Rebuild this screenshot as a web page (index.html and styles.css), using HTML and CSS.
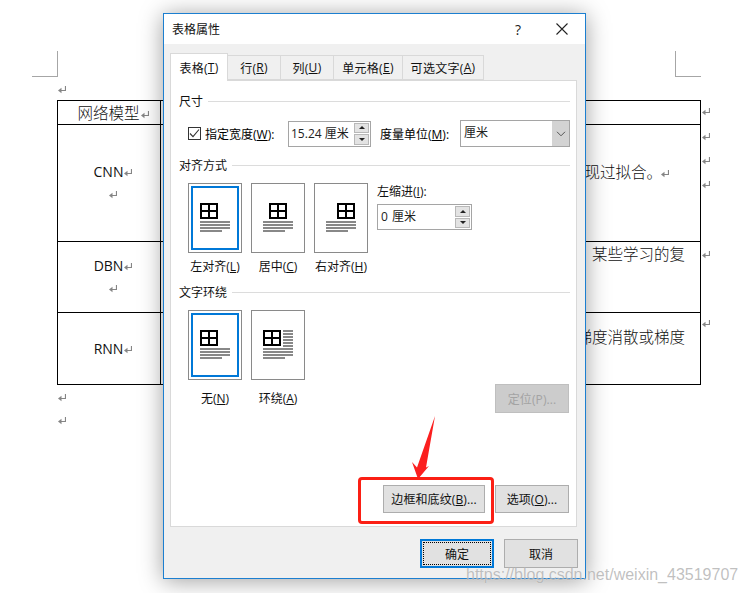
FILE: index.html
```html
<!DOCTYPE html>
<html lang="zh-CN">
<head>
<meta charset="utf-8">
<title>表格属性</title>
<link rel="stylesheet" href="styles.css">
</head>
<body>
<svg class="defs" width="0" height="0" aria-hidden="true">
  <defs>
    <g id="grid">
      <path d="M1.500 1.500h16v14h-16zM9.500 1.500v14M1.500 8.500h16" fill="#fff" stroke="#000" stroke-width="2"/>
    </g>
    <g id="para" fill="#888">
      <rect x="0" y="0" width="30" height="2"/>
      <rect x="0" y="3" width="30" height="2"/>
      <rect x="0" y="6" width="30" height="2"/>
      <rect x="0" y="9" width="22" height="2"/>
    </g>
    <g id="side" fill="#888">
      <rect x="0" y="0" width="10" height="2"/>
      <rect x="0" y="3" width="10" height="2"/>
      <rect x="0" y="6" width="10" height="2"/>
      <rect x="0" y="9" width="10" height="2"/>
      <rect x="0" y="12" width="10" height="2"/>
      <rect x="0" y="15" width="10" height="2"/>
    </g>
    <g id="retmark">
      <path d="M7.500 0v4.500H2" fill="none" stroke="#858585" stroke-width="1.200"/>
      <path d="M0 4.500L3.500 1.800v5.400z" fill="#858585"/>
    </g>
  </defs>
</svg>

<main class="doc">
  <div class="crops">
    <span class="crop crop-left"></span>
    <span class="crop crop-right"></span>
  </div>
  <p class="mark-line"><svg class="ret" width="8" height="8"><use href="#retmark"/></svg></p>
  <table class="doc-table">
    <tr class="r1">
      <td class="c1 head">网络模型<svg class="ret" width="8" height="8"><use href="#retmark"/></svg></td>
      <td class="c2"></td>
      <td class="c3"><svg class="ret" width="8" height="8"><use href="#retmark"/></svg></td>
    </tr>
    <tr class="r2">
      <td class="c1"><div class="cell-word cnn">CNN<svg class="ret" width="8" height="8"><use href="#retmark"/></svg></div><div class="cell-ret"><svg class="ret" width="8" height="8"><use href="#retmark"/></svg></div></td>
      <td class="c2"><div class="cell-text t-cnn">现过拟合。<svg class="ret wide" width="8" height="8"><use href="#retmark"/></svg></div></td>
      <td class="c3"><svg class="ret" width="8" height="8"><use href="#retmark"/></svg><svg class="ret" width="8" height="8"><use href="#retmark"/></svg><svg class="ret" width="8" height="8"><use href="#retmark"/></svg></td>
    </tr>
    <tr class="r3">
      <td class="c1"><div class="cell-word dbn">DBN<svg class="ret" width="8" height="8"><use href="#retmark"/></svg></div><div class="cell-ret"><svg class="ret" width="8" height="8"><use href="#retmark"/></svg></div></td>
      <td class="c2"><div class="cell-text t-dbn">某些学习的复</div></td>
      <td class="c3"><svg class="ret" width="8" height="8"><use href="#retmark"/></svg></td>
    </tr>
    <tr class="r4">
      <td class="c1"><div class="cell-word rnn">RNN<svg class="ret" width="8" height="8"><use href="#retmark"/></svg></div></td>
      <td class="c2"><div class="cell-text t-rnn">梯度消散或梯度</div></td>
      <td class="c3"><svg class="ret" width="8" height="8"><use href="#retmark"/></svg></td>
    </tr>
  </table>
  <p class="mark-line after1"><svg class="ret" width="8" height="8"><use href="#retmark"/></svg></p>
  <p class="mark-line after2"><svg class="ret" width="8" height="8"><use href="#retmark"/></svg></p>
</main>

<section class="dialog">
  <header class="titlebar">
    <span class="title">表格属性</span>
    <span class="help">?</span>
    <svg class="close" width="12" height="12" viewBox="0 0 12 12"><path d="M.5.5l11 11M11.500.5l-11 11" stroke="#222" stroke-width="1.100" fill="none"/></svg>
  </header>

  <nav class="tabs">
    <span class="tab active tab-a">表格(<u>T</u>)</span>
    <span class="tab tab-b">行(<u>R</u>)</span>
    <span class="tab tab-b">列(<u>U</u>)</span>
    <span class="tab tab-c">单元格(<u>E</u>)</span>
    <span class="tab tab-d">可选文字(<u>A</u>)</span>
  </nav>

  <div class="panel">
    <h3 class="group">尺寸</h3>
    <div class="size-row">
      <span class="check"><svg width="13" height="13" viewBox="0 0 13 13"><path d="M2 6.500l3 3.200L11 2.500" fill="none" stroke="#333" stroke-width="1.100"/></svg></span>
      <span class="lbl-width">指定宽度(<u>W</u>):</span>
      <span class="spin spin-width">
        <span class="spin-val">15.24 厘米</span>
        <span class="spin-btns"><span class="spin-btn"><i class="tri up"></i></span><span class="spin-btn"><i class="tri down"></i></span></span>
      </span>
      <span class="lbl-unit">度量单位(<u>M</u>):</span>
      <span class="select">
        <span class="select-val">厘米</span>
        <span class="select-arrow"><svg width="10" height="6" viewBox="0 0 10 6"><path d="M1 .8l4 4 4-4" fill="none" stroke="#555" stroke-width="1"/></svg></span>
      </span>
    </div>

    <h3 class="group group-align">对齐方式</h3>
    <div class="align-row">
      <div class="choice">
        <span class="tile selected"><svg class="art" width="54" height="70"><use href="#grid" x="11.500" y="19.500"/><use href="#para" x="12" y="38"/></svg></span>
        <span class="choice-label">左对齐(<u>L</u>)</span>
      </div>
      <div class="choice">
        <span class="tile"><svg class="art" width="54" height="70"><use href="#grid" x="17.500" y="19.500"/><use href="#para" x="12" y="38"/></svg></span>
        <span class="choice-label">居中(<u>C</u>)</span>
      </div>
      <div class="choice">
        <span class="tile"><svg class="art" width="54" height="70"><use href="#grid" x="22.500" y="19.500"/><use href="#para" x="12" y="38"/></svg></span>
        <span class="choice-label">右对齐(<u>H</u>)</span>
      </div>
      <div class="indent">
        <span class="indent-label">左缩进(<u>I</u>):</span>
        <span class="spin spin-indent">
          <span class="spin-val">0 厘米</span>
          <span class="spin-btns"><span class="spin-btn"><i class="tri up"></i></span><span class="spin-btn"><i class="tri down"></i></span></span>
        </span>
      </div>
    </div>

    <h3 class="group group-wrap">文字环绕</h3>
    <div class="wrap-row">
      <div class="wrap-choices">
        <div class="choice wide-gap">
          <span class="tile selected"><svg class="art" width="54" height="70"><use href="#grid" x="11.500" y="19.500"/><use href="#para" x="12" y="38"/></svg></span>
          <span class="choice-label">无(<u>N</u>)</span>
        </div>
        <div class="choice wide-gap">
          <span class="tile"><svg class="art" width="54" height="70"><use href="#grid" x="11.500" y="19.500"/><use href="#side" x="32" y="20"/><use href="#para" x="12" y="38"/></svg></span>
          <span class="choice-label">环绕(<u>A</u>)</span>
        </div>
      </div>
      <button class="btn btn-pos" disabled>定位(P)...</button>
    </div>

    <div class="panel-actions">
      <button class="btn btn-border">边框和底纹(<u>B</u>)...</button>
      <button class="btn btn-opts">选项(<u>O</u>)...</button>
    </div>
  </div>

  <footer class="footer">
    <button class="btn btn-ok"><span class="focus">确定</span></button>
    <button class="btn btn-cancel">取消</button>
  </footer>
</section>

<div class="highlight"></div>
<svg class="arrow" width="30" height="66" viewBox="0 0 30 66"><path d="M25 1L16 52.500L19 51L8 64L2 47L7 52.500Z" fill="#fb1f1f"/></svg>
<span class="watermark">https://blog.csdn.net/weixin_43519707</span>
</body>
</html>
```
FILE: styles.css
```css
* { box-sizing: border-box; }
html, body { margin: 0; padding: 0; }
body {
  position: relative;
  width: 748px;
  height: 593px;
  overflow: hidden;
  background: #fff;
  color: #000;
  font-family: "Open Sans", "Noto Sans CJK SC", "Noto Sans", sans-serif;
  font-size: 12px;
}
.defs { position: absolute; }
u { text-decoration: underline; text-underline-offset: 1px; }

/* document behind the dialog */
.doc { padding: 51px 0 0 57px; }
.crops { position: relative; height: 26px; width: 644px; }
.crop { position: absolute; top: 0; width: 26px; height: 26px; border-bottom: 1px solid #a6a6a6; }
.crop-left { left: -25px; border-right: 1px solid #a6a6a6; }
.crop-right { left: 618px; border-left: 1px solid #a6a6a6; }
.mark-line { margin: 0; height: 23px; padding: 9px 0 0 1px; line-height: 8px; }
.ret { display: inline-block; vertical-align: baseline; }
.doc-table { border-collapse: collapse; table-layout: fixed; width: 663px; }
.doc-table td { padding: 0; vertical-align: top; }
.c1 { width: 103px; border: 1px solid #000; text-align: center; }
.c2 { width: 540px; border: 1px solid #000; text-align: right; }
.c3 { width: 20px; border: 0; }
.doc-table td.c3 { padding-left: 1px; }
.c3 .ret { display: block; }
.r1 { height: 24px; }
.r2 { height: 117px; }
.r3 { height: 71px; }
.r4 { height: 72px; }
.head { font-family: "Noto Sans CJK SC", sans-serif; font-size: 15.500px; line-height: 22px; color: #111; font-weight: 300; }
.doc-table td.head { padding-left: 8px; }
.head .ret { margin-left: 1px; }
.r1 .c3 .ret { margin-top: 7px; }
.r2 .c3 .ret { margin-top: 8px; margin-bottom: 16px; }
.r3 .c3 .ret { margin-top: 9px; }
.r4 .c3 .ret { margin-top: 7px; }
.cell-word { font-size: 14px; line-height: 18px; color: #111; }
.doc-table td.c1 .cell-word { padding-left: 8px; }
.cell-word .ret { margin-left: 1px; }
.cnn { padding-top: 38px; }
.dbn { padding-top: 15px; }
.rnn { padding-top: 27px; }
.cell-ret { margin-top: 10px; padding-left: 7px; line-height: 8px; }
.cell-text { font-family: "Noto Sans CJK SC", sans-serif; font-size: 15.500px; line-height: 22px; color: #111; font-weight: 300; }
.t-cnn { padding: 35px 31px 0 0; }
.t-dbn { padding: 0 15px 0 0; }
.t-rnn { padding: 12px 15px 0 0; }
.ret.wide { margin-left: -1px; }
.mark-line.after1 { margin-top: 0; }

/* dialog window */
.dialog {
  position: absolute;
  left: 163px;
  top: 13px;
  width: 423px;
  height: 566px;
  display: flex;
  flex-direction: column;
  background: #f0f0f0;
  border: 1px solid #1c7fd0;
  box-shadow: 0 2px 22px rgba(0, 0, 0, .38);
}
.titlebar {
  height: 30px;
  flex: none;
  background: #fff;
  display: flex;
  align-items: center;
  padding: 0 17px 0 8px;
}
.title { font-size: 12px; flex: 1; color: #111; }
.help { font-size: 14px; margin-right: 35px; color: #222; }
.tabs { display: flex; align-items: flex-end; height: 27px; margin: 9px 0 0 6px; position: relative; z-index: 1; }
.tab {
  height: 25px;
  border: 1px solid #d9d9d9;
  border-left-width: 0;
  background: #f0f0f0;
  display: flex;
  align-items: center;
  justify-content: center;
  color: #111;
  font-size: 12px;
  letter-spacing: .3px;
}
.tab.active {
  height: 28px;
  margin-bottom: -1px;
  border-left-width: 1px;
  border-bottom: 0;
  background: #fff;
}
.tab-a { width: 58px; }
.tab-b { width: 53px; }
.tab-c { width: 69px; }
.tab-d { width: 81px; }
.panel {
  width: 407px;
  height: 447px;
  margin-left: 6px;
  flex: none;
  background: #fff;
  border: 1px solid #d9d9d9;
  padding: 12px 6px 13px 8px;
  display: flex;
  flex-direction: column;
}
.group {
  margin: 0;
  height: 16px;
  display: flex;
  align-items: center;
  gap: 5px;
  font-size: 12px;
  font-weight: 400;
  color: #111;
}
.group::after { content: ""; flex: 1; height: 1px; background: #dcdcdc; }
.size-row { display: flex; align-items: center; height: 27px; margin: 11px 0 0 9px; }
.check { width: 13px; height: 13px; border: 1px solid #333; display: flex; flex: none; }
.check svg { margin: -1px; }
.lbl-width { margin-left: 4px; width: 83px; white-space: nowrap; }
.spin { display: flex; border: 1px solid #a5a5a5; background: #fff; flex: none; }
.spin-width { width: 83px; height: 26px; }
.spin-indent { width: 95px; height: 26px; }
.spin-val { flex: 1; padding-left: 2px; line-height: 23px; white-space: nowrap; color: #222; }
.spin-indent .spin-val { padding-left: 3px; word-spacing: 1px; }
.spin-btns { width: 15px; margin: 1px; display: flex; flex-direction: column; gap: 1px; }
.spin-btn { flex: 1; background: #e3e3e3; border: 1px solid #b8b8b8; display: flex; align-items: center; justify-content: center; }
.tri { width: 0; height: 0; border-left: 3px solid transparent; border-right: 3px solid transparent; }
.tri.up { border-bottom: 3px solid #222; }
.tri.down { border-top: 3px solid #222; }
.lbl-unit { margin-left: 9px; width: 80px; white-space: nowrap; }
.select { flex: none; width: 110px; height: 27px; border: 1px solid #a5a5a5; background: #fff; display: flex; }
.select-val { flex: 1; padding-left: 3px; line-height: 24px; color: #222; }
.select-arrow { width: 17px; background: #d3d3d3; display: flex; align-items: center; justify-content: center; }
.group-align { margin-top: 10px; }
.align-row { display: flex; gap: 9px; margin: 10px 0 0 9px; }
.choice { width: 54px; display: flex; flex-direction: column; align-items: center; gap: 6px; }
.choice.wide-gap { gap: 11px; }
.tile { display: block; position: relative; width: 54px; height: 70px; border: 1px solid #8a8a8a; background: #fff; }
.tile.selected::after { content: ""; position: absolute; inset: 2px; border: 2px solid #0078d7; }
.art { position: absolute; left: -1px; top: -1px; }
.choice-label { line-height: 16px; white-space: nowrap; color: #111; }
.indent { display: flex; flex-direction: column; padding-top: 1px; }
.indent-label { line-height: 16px; margin-bottom: 4px; color: #111; }
.group-wrap { margin-top: 9px; }
.wrap-row { display: flex; justify-content: space-between; margin: 10px 1px 0 9px; }
.wrap-choices { display: flex; gap: 9px; }
.btn {
  font: inherit;
  font-size: 12px;
  color: #111;
  background: #e1e1e1;
  border: 1px solid #adadad;
  padding: 0;
  height: 29px;
  flex: none;
  letter-spacing: .1px;
}
.btn-pos { width: 74px; margin-top: 74px; background: #cccccc; border-color: #bfbfbf; color: #a3a3a3; }
.panel-actions { margin-top: auto; margin-right: 1px; display: flex; justify-content: flex-end; gap: 10px; }
.btn-border { width: 102px; height: 28px; }
.btn-opts { width: 74px; height: 28px; }
.footer { display: flex; justify-content: flex-end; gap: 10px; margin: 12px 7px 0 0; }
.btn-ok { width: 74px; border: 2px solid #0078d7; padding: 1px; }
.focus { display: flex; align-items: center; justify-content: center; height: 100%; border: 1px dotted #000; }
.btn-cancel { width: 74px; }

/* annotations on the screenshot */
.highlight {
  position: absolute;
  left: 358px;
  top: 477px;
  width: 136px;
  height: 47px;
  border: 3px solid #fb1f14;
  border-radius: 4px;
}
.arrow { position: absolute; left: 410px; top: 415px; }
.watermark {
  position: absolute;
  left: 466px;
  top: 565px;
  font-family: "Liberation Sans", sans-serif;
  font-size: 16px;
  line-height: 20px;
  white-space: nowrap;
  color: rgba(150, 150, 150, .6);
  text-shadow: 0 0 1px rgba(255, 255, 255, .7);
}
```
